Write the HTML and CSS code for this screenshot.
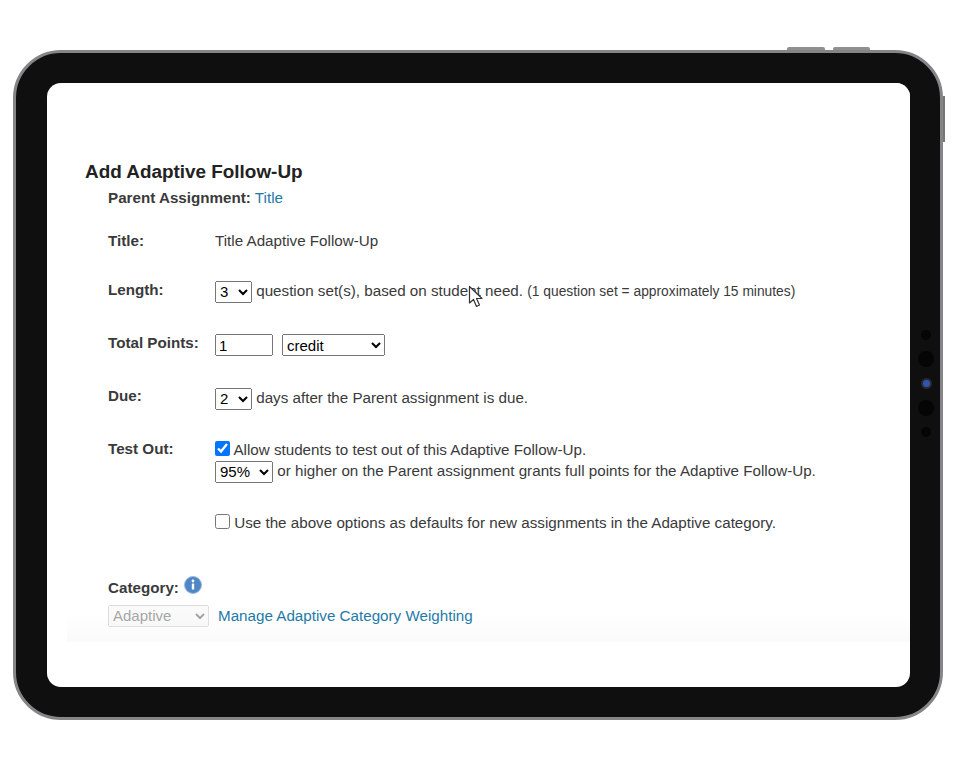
FILE: index.html
```html
<!DOCTYPE html>
<html lang="en">
<head>
    <meta charset="UTF-8">
    <meta name="viewport" content="width=device-width, initial-scale=1.0">
    <title>Add Adaptive Follow-Up</title>
    <link rel="stylesheet" href="styles.css">
</head>
<body>
    <div class="tablet">
        <span class="top-button top-button-left"></span>
        <span class="top-button top-button-right"></span>
        <span class="side-button"></span>

        <div class="sensors">
            <span class="dot dot-small"></span>
            <span class="dot dot-big"></span>
            <span class="dot dot-lens"></span>
            <span class="dot dot-big"></span>
            <span class="dot dot-small"></span>
        </div>

        <div class="screen">
            <div class="panel">
                <h1>Add Adaptive Follow-Up</h1>
                <div class="parent"><b>Parent Assignment:</b> <a href="#">Title</a></div>

                <div class="row row-title">
                    <label>Title:</label>
                    <div>Title Adaptive Follow-Up</div>
                </div>

                <div class="row row-length">
                    <label>Length:</label>
                    <div>
                        <select class="pick-num"><option>3</option></select>
                        question set(s), based on student need.
                        <small>(1 question set = approximately 15 minutes)</small>
                    </div>
                </div>

                <div class="row row-points">
                    <label>Total Points:</label>
                    <div class="points">
                        <input type="text" value="1">
                        <select class="pick-type"><option>credit</option></select>
                    </div>
                </div>

                <div class="row row-due">
                    <label>Due:</label>
                    <div>
                        <select class="pick-num"><option>2</option></select>
                        days after the Parent assignment is due.
                    </div>
                </div>

                <div class="row row-test">
                    <label>Test Out:</label>
                    <div>
                        <div class="check-line allow">
                            <input type="checkbox" checked>
                            Allow students to test out of this Adaptive Follow-Up.
                        </div>
                        <div class="pct-line">
                            <select class="pick-pct"><option>95%</option></select>
                            or higher on the Parent assignment grants full points for the Adaptive Follow-Up.
                        </div>
                        <div class="check-line defaults">
                            <input type="checkbox">
                            Use the above options as defaults for new assignments in the Adaptive category.
                        </div>
                    </div>
                </div>

                <div class="category">
                    <div class="category-label">
                        <b>Category:</b>
                        <svg class="info" width="18" height="18" viewBox="0 0 18 18">
                            <circle cx="9" cy="9" r="8.5" fill="#4f86c6" stroke="#9db9dc"/>
                            <circle cx="9" cy="5" r="1.4" fill="#fff"/>
                            <rect x="7.8" y="7.4" width="2.4" height="6.2" rx="0.6" fill="#fff"/>
                        </svg>
                    </div>
                    <div class="category-pick">
                        <select class="pick-cat" disabled><option>Adaptive</option></select>
                        <a href="#">Manage Adaptive Category Weighting</a>
                    </div>
                </div>
            </div>
        </div>

        <svg class="cursor" width="16" height="24" viewBox="0 0 16 24">
            <path d="M1.5 1.5 L1.5 18 L5.5 14.5 L8.5 21.5 L11.5 20 L8.5 13.5 L14 13.5 Z" fill="#fff" stroke="#333" stroke-width="1.2" stroke-linejoin="round"/>
        </svg>
    </div>
</body>
</html>
```

FILE: styles.css
```css
body { margin: 0; background: #fff; font-family: "Liberation Sans", Arial, sans-serif; font-size: 15.2px; color: #3a3a3a; }
a { color: #1f7aa8; text-decoration: none; }

.tablet { position: relative; box-sizing: border-box; width: 930px; height: 670px; margin: 50px 0 0 13px; padding: 30px 30px 30px 31px; background: #0f0f0f; border: 3px solid #858588; border-radius: 48px; }
.screen { height: 100%; background: #fff; border-radius: 14px; padding-left: 20px; overflow: hidden; }

.top-button { position: absolute; top: -6px; height: 3px; background: #8f8f92; border-radius: 2px 2px 0 0; }
.top-button-left { left: 771px; width: 38px; }
.top-button-right { left: 817px; width: 37px; }
.side-button { position: absolute; left: 927px; top: 43px; width: 2px; height: 46px; background: #77777a; }

.sensors { position: absolute; left: 902px; top: 277px; width: 16px; display: flex; flex-direction: column; align-items: center; }
.dot { display: block; border-radius: 50%; background: #050505; }
.dot-small { width: 10px; height: 10px; }
.dot-big { width: 16px; height: 16px; margin: 11px 0; }
.dot-lens { width: 7px; height: 7px; background: #2f55b0; border: 2px solid #2a2a30; }

.panel { height: 559px; box-sizing: border-box; padding: 78px 0 0 18px; background: linear-gradient(to bottom, #fff calc(100% - 30px), #fafafa 100%); }
h1 { margin: 0; font-size: 18.9px; line-height: 22px; color: #222; }
.parent { margin: 6px 0 0 23px; line-height: 18px; }

.row { display: grid; grid-template-columns: 107px 1fr; margin-left: 23px; }
.row label { font-weight: bold; }
.row-title { margin-top: 25px; line-height: 18px; }
.row-length { margin-top: 30px; line-height: 22px; }
.row-points { margin-top: 31px; line-height: 22px; }
.row-due { margin-top: 31px; line-height: 22px; }
.row-test { margin-top: 28px; line-height: 22px; }
.row-length label { margin-top: -1px; }
.row-points label, .row-due label { margin-top: -2px; }
small { font-size: 13.8px; }

select { font-family: "Liberation Sans", Arial, sans-serif; font-size: 15px; height: 22px; padding: 0; vertical-align: middle; }
.pick-num { width: 37px; }
.pick-type { width: 103px; }
.pick-pct { width: 58px; }
.pick-cat { width: 101px; }
.points { display: flex; gap: 9px; }
.points input { box-sizing: border-box; width: 58px; height: 22px; padding: 1px 2px; font-family: "Liberation Sans", Arial, sans-serif; font-size: 15px; }
.check-line input { width: 15px; height: 15px; margin: 0; vertical-align: -1px; }
.allow { padding-top: 1px; }
.pct-line { margin-top: -1px; }
.defaults { margin-top: 29px; }

.category { margin: 43px 0 0 23px; }
.category-label { display: flex; gap: 5px; line-height: 22px; }
.info { margin-top: -1px; }
.category-pick { display: flex; align-items: center; gap: 9px; margin-top: 6px; }

.cursor { position: absolute; left: 452px; top: 232px; }
```
